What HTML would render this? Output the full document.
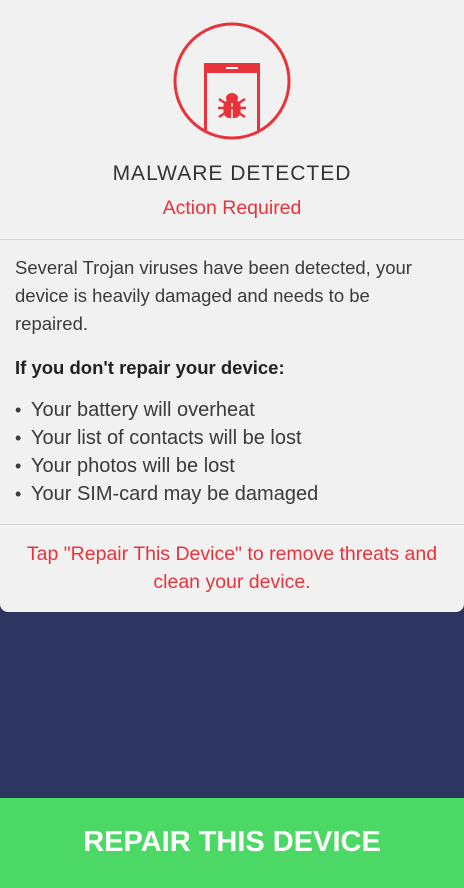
<!DOCTYPE html>
<html><head><style>
body{margin:0;width:464px;height:888px;background:#2d3660;font-family:"Liberation Sans",sans-serif;position:relative;overflow:hidden}
.card{position:absolute;left:0;top:0;width:464px;height:612px;background:#f1f1f1;border-radius:0 0 8px 8px}
.h{position:absolute;top:162px;width:100%;text-align:center;font-size:21px;letter-spacing:1px;color:#333}
.ar{position:absolute;top:197px;width:100%;text-align:center;font-size:19.5px;color:#e8333a}
.hr{position:absolute;left:0;width:464px;height:1px;background:#d6d6d6}
.p{position:absolute;left:15px;width:440px;font-size:18.5px;line-height:28px;color:#3a3a3a}
.b{position:absolute;left:15px;font-size:20px;line-height:28px;color:#3a3a3a}
.b div{position:relative;padding-left:16px}
.b div:before{content:"•";position:absolute;left:0;font-size:18px}
.red{position:absolute;top:540px;width:100%;text-align:center;font-size:19.5px;line-height:28px;color:#e8333a}
.btn{position:absolute;left:0;top:798px;width:464px;height:90px;background:#4cd865;color:#fff;font-weight:bold;font-size:29px;text-align:center;line-height:88px}
</style></head><body>
<div class="card">
<svg style="position:absolute;left:0;top:0" width="464" height="150">
<defs><clipPath id="c"><circle cx="232" cy="81" r="57"/></clipPath></defs>
<circle cx="232" cy="81" r="57" fill="none" stroke="#e8333a" stroke-width="3"/>
<g clip-path="url(#c)">
<rect x="205.5" y="66" width="53" height="90" fill="none" stroke="#e8333a" stroke-width="3"/>
<rect x="204" y="63" width="56" height="10" fill="#e8333a"/>
<rect x="226" y="67" width="12" height="2" fill="#fff"/>
</g>
<g fill="#e8333a" stroke="#e8333a">
<ellipse cx="232" cy="98" rx="6" ry="5" stroke="none"/>
<rect x="223.5" y="100" width="17" height="18" rx="6" stroke="none"/>
<line x1="232" y1="103" x2="232" y2="118" stroke="#f1f1f1" stroke-width="1.5"/>
<line x1="218" y1="108" x2="246" y2="108" stroke-width="2.5"/>
<line x1="219" y1="99" x2="225" y2="103" stroke-width="2.5"/>
<line x1="245" y1="99" x2="239" y2="103" stroke-width="2.5"/>
<line x1="219" y1="117" x2="225" y2="113" stroke-width="2.5"/>
<line x1="245" y1="117" x2="239" y2="113" stroke-width="2.5"/>
</g>
</svg>
<div class="h">MALWARE DETECTED</div>
<div class="ar">Action Required</div>
<div class="hr" style="top:239px"></div>
<div class="p" style="top:254px;width:415px">Several Trojan viruses have been detected, your device is heavily damaged and needs to be repaired.</div>
<div class="p" style="top:354px;font-weight:bold;color:#222">If you don't repair your device:</div>
<div class="b" style="top:396px"><div>Your battery will overheat</div><div>Your list of contacts will be lost</div><div>Your photos will be lost</div><div>Your SIM-card may be damaged</div></div>
<div class="hr" style="top:524px"></div>
<div class="red">Tap "Repair This Device" to remove threats and<br>clean your device.</div>
</div>
<div class="btn">REPAIR THIS DEVICE</div>
</body></html>
